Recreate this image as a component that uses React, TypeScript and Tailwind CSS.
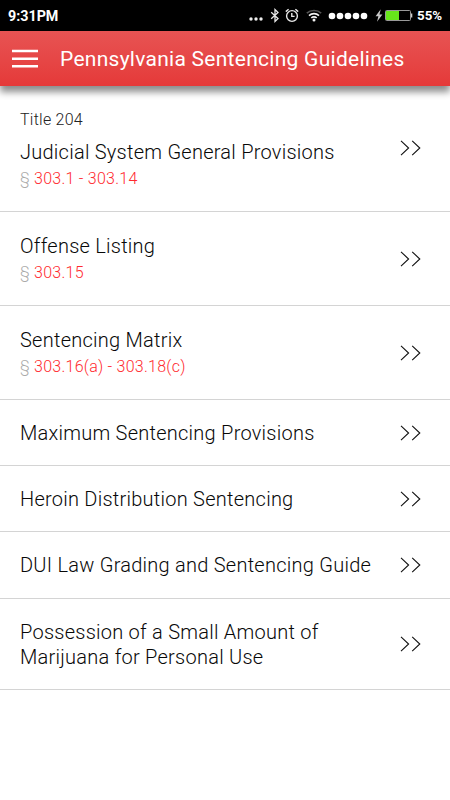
import React from 'react';

interface Provision {
  title: string[];
  caption?: string;
  section?: string;
  rowClass: string;
}

const PROVISIONS: Provision[] = [
  {
    caption: 'Title 204',
    title: ['Judicial System General Provisions'],
    section: '303.1 - 303.14',
    rowClass: 'h-[126px] pt-[20px]',
  },
  { title: ['Offense Listing'], section: '303.15', rowClass: 'h-[94px] pt-[22px]' },
  { title: ['Sentencing Matrix'], section: '303.16(a) - 303.18(c)', rowClass: 'h-[94px] pt-[22px]' },
  { title: ['Maximum Sentencing Provisions'], rowClass: 'h-[66px] pt-[21px]' },
  { title: ['Heroin Distribution Sentencing'], rowClass: 'h-[66px] pt-[21px]' },
  { title: ['DUI Law Grading and Sentencing Guide'], rowClass: 'h-[67px] pt-[21px]' },
  { title: ['Possession of a Small Amount of', 'Marijuana for Personal Use'], rowClass: 'h-[91px] pt-[21px]' },
];

function BluetoothIcon() {
  return (
    <svg className="ml-[7px]" width="10" height="15" viewBox="0 0 10 15" fill="none" stroke="#e8e8e8" strokeWidth="1.3">
      <path d="M1.2 4.2 8 10.6 5 13.4V1.6L8 4.4 1.2 10.8" />
    </svg>
  );
}

function AlarmIcon() {
  return (
    <svg className="ml-[5px]" width="14" height="15" viewBox="0 0 14 15" fill="none" stroke="#e8e8e8" strokeWidth="1.4">
      <circle cx="7" cy="8" r="5.4" />
      <path d="M6.8 5v3.4h2.8M.8 3.6 3.6 1.2M13.2 3.6l-2.8-2.4" />
    </svg>
  );
}

function WifiIcon() {
  return (
    <svg className="ml-[7px]" width="16" height="13" viewBox="0 0 16 13" fill="none" strokeWidth="1.6">
      <path d="M.8 4.2C4.8.6 11.2.6 15.2 4.2" stroke="#555" />
      <path d="M3 6.6c2.8-2.6 7.2-2.6 10 0M5.3 9c1.5-1.5 3.9-1.5 5.4 0" stroke="#f2f2f2" />
      <circle cx="8" cy="11" r="1.5" fill="#f2f2f2" />
    </svg>
  );
}

function BatteryIcon() {
  return (
    <svg className="ml-[1px]" width="29" height="13" viewBox="0 0 29 13">
      <rect x="1.5" y="1.5" width="25" height="10" rx="1" fill="none" stroke="#999" />
      <path d="M27 4.5h1.3v4H27z" fill="#ccc" />
      <path d="M2 2h13v9H2z" fill="#67e61a" />
    </svg>
  );
}

function StatusBar() {
  return (
    <div className="flex h-[31px] items-center bg-black pr-[8px] pl-[8px] text-[14.3px] font-bold text-white">
      <span className="flex-1 pt-[2px]">9:31PM</span>
      <svg width="14" height="15" viewBox="0 0 14 15" fill="#eee">
        <circle cx="2" cy="11" r="1.7" />
        <circle cx="7" cy="11" r="1.7" />
        <circle cx="12" cy="11" r="1.7" />
      </svg>
      <BluetoothIcon />
      <AlarmIcon />
      <WifiIcon />
      {/* signal strength */}
      <svg className="ml-[6px]" width="40" height="8" viewBox="0 0 40 8" fill="#fff">
        <circle cx="4" cy="4" r="3.3" />
        <circle cx="12" cy="4" r="3.3" />
        <circle cx="20" cy="4" r="3.3" />
        <circle cx="28" cy="4" r="3.3" />
        <circle cx="36" cy="4" r="3.3" />
      </svg>
      <svg className="ml-[7px]" width="8" height="13" viewBox="0 0 8 13" fill="#c8c8c8">
        <path d="M5.7.3.6 7.2h2.8L2 12.8l5.4-7.3H4.5z" />
      </svg>
      <BatteryIcon />
      <span className="ml-[4px] w-[25px] pt-px text-[13.3px] whitespace-nowrap">55%</span>
    </div>
  );
}

function ProvisionRow({ title, caption, section, rowClass }: Provision) {
  return (
    <li className={`flex justify-between border-b border-[#d4d4d4] pr-[29px] pl-[20px] ${rowClass}`}>
      <div>
        {caption && (
          <p className="mb-[6px] text-[16px] leading-[28px] font-light tracking-[0.25px] text-[#222]">{caption}</p>
        )}
        <h2 className="text-[20px] leading-[25px] font-light tracking-[0.25px] text-[#080808]">
          {title.map((line) => (
            <span key={line} className="block">
              {line}
            </span>
          ))}
        </h2>
        {section && (
          <p className="text-[16px] leading-[27px] font-light tracking-[0.25px] text-[#ff2a2e]">
            <span className="text-[#aaa]">§</span> {section}
          </p>
        )}
      </div>
      <div className={`flex items-center ${section && !caption ? 'pb-[22px]' : 'pb-[21px]'}`}>
        <svg width="21" height="16" viewBox="0 0 21 16" fill="none" stroke="#111" strokeWidth="1.1">
          <path d="M1 .8 8.6 8 1 15.2M12.2.8 19.8 8l-7.6 7.2" />
        </svg>
      </div>
    </li>
  );
}

export default function App() {
  return (
    <div className="h-[800px] w-[450px] overflow-hidden bg-white font-[Roboto,sans-serif]">
      <StatusBar />
      <header className="flex h-[55px] items-center bg-linear-to-b from-[#e75353] to-[#e53939] pl-[12px] shadow-[0_6px_7px_rgba(0,0,0,0.45)]">
        <button type="button" aria-label="Menu">
          <svg width="26" height="19" viewBox="0 0 26 19" fill="#fff" className="block">
            <path d="M0 .7h26v2.5H0zM0 8.4h26v2.5H0zM0 16.1h26v2.5H0z" />
          </svg>
        </button>
        <h1 className="ml-[22px] pt-[2px] text-[21px] tracking-[0.27px] whitespace-nowrap text-white">
          Pennsylvania Sentencing Guidelines
        </h1>
      </header>
      <ul>
        {PROVISIONS.map((item) => (
          <ProvisionRow key={item.title[0]} {...item} />
        ))}
      </ul>
    </div>
  );
}
